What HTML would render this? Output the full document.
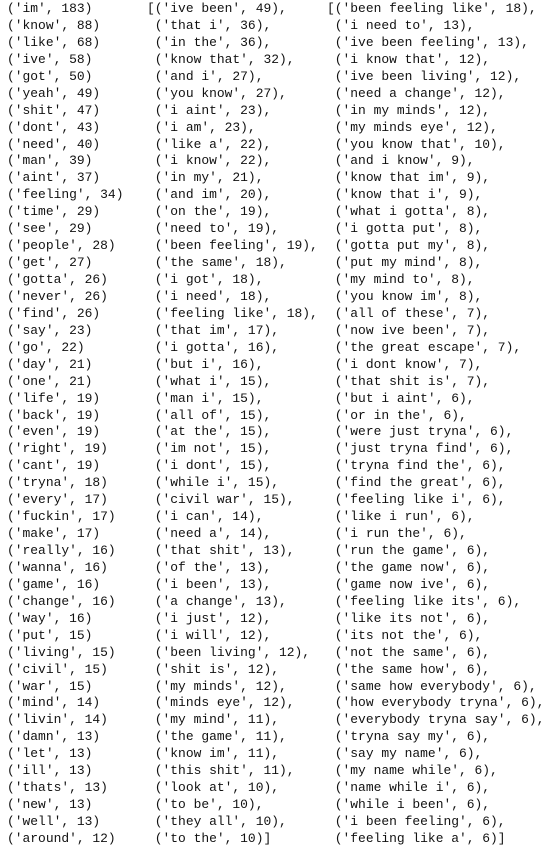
<!DOCTYPE html>
<html><head><style>
body{margin:0;background:#fff;width:555px;height:856px;overflow:hidden}
pre{position:absolute;top:1px;margin:0;font-family:"Liberation Mono",monospace;font-size:12.95px;line-height:16.93px;color:#111}
</style></head><body>
<pre style="left:7px">('im', 183)
('know', 88)
('like', 68)
('ive', 58)
('got', 50)
('yeah', 49)
('shit', 47)
('dont', 43)
('need', 40)
('man', 39)
('aint', 37)
('feeling', 34)
('time', 29)
('see', 29)
('people', 28)
('get', 27)
('gotta', 26)
('never', 26)
('find', 26)
('say', 23)
('go', 22)
('day', 21)
('one', 21)
('life', 19)
('back', 19)
('even', 19)
('right', 19)
('cant', 19)
('tryna', 18)
('every', 17)
('fuckin', 17)
('make', 17)
('really', 16)
('wanna', 16)
('game', 16)
('change', 16)
('way', 16)
('put', 15)
('living', 15)
('civil', 15)
('war', 15)
('mind', 14)
('livin', 14)
('damn', 13)
('let', 13)
('ill', 13)
('thats', 13)
('new', 13)
('well', 13)
('around', 12)</pre>
<pre style="left:147px">[('ive been', 49),
 ('that i', 36),
 ('in the', 36),
 ('know that', 32),
 ('and i', 27),
 ('you know', 27),
 ('i aint', 23),
 ('i am', 23),
 ('like a', 22),
 ('i know', 22),
 ('in my', 21),
 ('and im', 20),
 ('on the', 19),
 ('need to', 19),
 ('been feeling', 19),
 ('the same', 18),
 ('i got', 18),
 ('i need', 18),
 ('feeling like', 18),
 ('that im', 17),
 ('i gotta', 16),
 ('but i', 16),
 ('what i', 15),
 ('man i', 15),
 ('all of', 15),
 ('at the', 15),
 ('im not', 15),
 ('i dont', 15),
 ('while i', 15),
 ('civil war', 15),
 ('i can', 14),
 ('need a', 14),
 ('that shit', 13),
 ('of the', 13),
 ('i been', 13),
 ('a change', 13),
 ('i just', 12),
 ('i will', 12),
 ('been living', 12),
 ('shit is', 12),
 ('my minds', 12),
 ('minds eye', 12),
 ('my mind', 11),
 ('the game', 11),
 ('know im', 11),
 ('this shit', 11),
 ('look at', 10),
 ('to be', 10),
 ('they all', 10),
 ('to the', 10)]</pre>
<pre style="left:327px">[('been feeling like', 18),
 ('i need to', 13),
 ('ive been feeling', 13),
 ('i know that', 12),
 ('ive been living', 12),
 ('need a change', 12),
 ('in my minds', 12),
 ('my minds eye', 12),
 ('you know that', 10),
 ('and i know', 9),
 ('know that im', 9),
 ('know that i', 9),
 ('what i gotta', 8),
 ('i gotta put', 8),
 ('gotta put my', 8),
 ('put my mind', 8),
 ('my mind to', 8),
 ('you know im', 8),
 ('all of these', 7),
 ('now ive been', 7),
 ('the great escape', 7),
 ('i dont know', 7),
 ('that shit is', 7),
 ('but i aint', 6),
 ('or in the', 6),
 ('were just tryna', 6),
 ('just tryna find', 6),
 ('tryna find the', 6),
 ('find the great', 6),
 ('feeling like i', 6),
 ('like i run', 6),
 ('i run the', 6),
 ('run the game', 6),
 ('the game now', 6),
 ('game now ive', 6),
 ('feeling like its', 6),
 ('like its not', 6),
 ('its not the', 6),
 ('not the same', 6),
 ('the same how', 6),
 ('same how everybody', 6),
 ('how everybody tryna', 6),
 ('everybody tryna say', 6),
 ('tryna say my', 6),
 ('say my name', 6),
 ('my name while', 6),
 ('name while i', 6),
 ('while i been', 6),
 ('i been feeling', 6),
 ('feeling like a', 6)]</pre>
</body></html>
